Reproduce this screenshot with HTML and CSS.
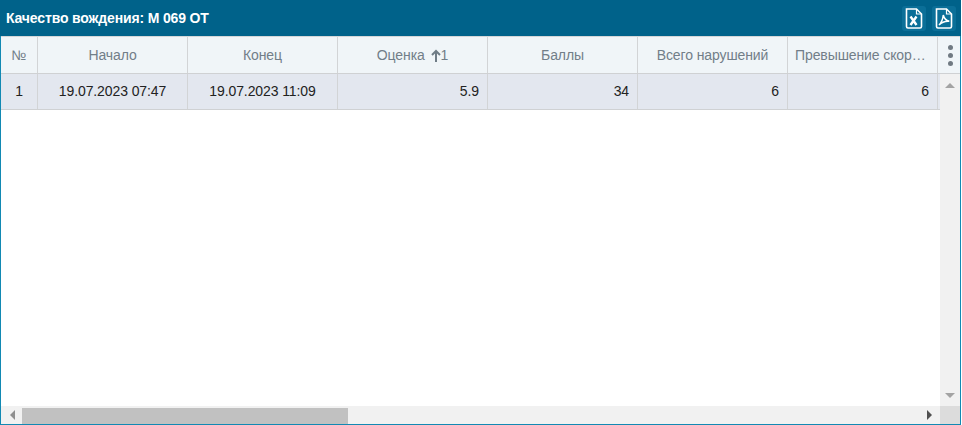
FILE: index.html
```html
<!DOCTYPE html>
<html lang="ru">
<head>
<meta charset="utf-8">
<title>Качество вождения</title>
<link rel="stylesheet" href="styles.css">
</head>
<body>
<div class="panel">
  <header class="titlebar">
    <h1 class="title">Качество вождения: М 069 ОТ</h1>
    <div class="actions">
      <span class="tile">
        <svg width="18" height="21" viewBox="0 0 18 21" fill="none" stroke="#fff" stroke-width="1.600"><path d="M1.500 1h10l5 5v12.500a1.500 1.500 0 0 1-1.500 1.500H3a1.500 1.500 0 0 1-1.500-1.500z"/><path d="M11.500 1v5h5" stroke-width="1.200"/><path d="M5.500 8.500l6 8.500M11.500 8.500l-6 8.500" stroke-width="2.400"/></svg>
      </span>
      <span class="tile">
        <svg width="18" height="21" viewBox="0 0 18 21" fill="none" stroke="#fff" stroke-width="1.600"><path d="M1.500 1h10l5 5v12.500a1.500 1.500 0 0 1-1.500 1.500H3a1.500 1.500 0 0 1-1.500-1.500z"/><path d="M11.500 1v5h5" stroke-width="1.200"/><path d="M4 17c2.200-2.200 3.800-5.500 4.300-10 .8 3.500 2.500 5.500 6 6.300-3.500-.3-7.500.8-10.300 3.700z" stroke-width="1.500"/></svg>
      </span>
    </div>
  </header>
  <div class="head">
    <div class="hc c-n">№</div>
    <div class="hc c-w">Начало</div>
    <div class="hc c-w">Конец</div>
    <div class="hc c-w">Оценка <span class="sort"><svg width="10" height="13" viewBox="0 0 10 13" fill="none" stroke="#6f7c86" stroke-width="2"><path d="M5 13V2M1 6l4-4 4 4"/></svg>1</span></div>
    <div class="hc c-w">Баллы</div>
    <div class="hc c-w">Всего нарушений</div>
    <div class="hc c-w hc-clip"><span class="clip">Превышение скорости</span></div>
    <div class="menu"><i></i><i></i><i></i></div>
  </div>
  <div class="body">
    <div class="rows">
      <div class="row">
        <div class="td c-n center">1</div>
        <div class="td c-w center">19.07.2023 07:47</div>
        <div class="td c-w center">19.07.2023 11:09</div>
        <div class="td c-w right">5.9</div>
        <div class="td c-w right">34</div>
        <div class="td c-w right">6</div>
        <div class="td c-w right">6</div>
      </div>
    </div>
    <div class="vscroll">
      <span class="arrow up"></span>
      <span class="arrow down"></span>
    </div>
  </div>
  <div class="hscroll">
    <span class="arrow left"></span>
    <div class="thumb"></div>
    <span class="arrow right"></span>
    <div class="corner"></div>
  </div>
</div>
</body>
</html>
```
FILE: styles.css
```css
* { box-sizing: border-box; }
html, body { margin: 0; height: 100%; }
body { font-family: "Liberation Sans", Arial, sans-serif; background: #fff; overflow: hidden; }
.panel {
  width: 961px; height: 425px;
  display: flex; flex-direction: column;
  border: 1px solid #1289b3; border-top: 0;
  background: #fff;
}
.titlebar {
  height: 36px; flex: none;
  margin: 0 -1px;
  background: #00628a;
  display: flex; align-items: center; justify-content: space-between;
  padding: 0 5px 0 6px;
}
.title { margin: 0; font-size: 14px; font-weight: 700; color: #fff; line-height: 36px; letter-spacing: -0.15px; }
.actions { display: flex; gap: 6px; margin-top: 1px; }
.tile {
  width: 24px; height: 25px; border-radius: 3px;
  background: #0b6f98;
  display: flex; align-items: center; justify-content: center;
}
.head {
  height: 38px; flex: none;
  display: flex;
  background: #f0f5f8;
  border-top: 1px solid #d4d6d8;
  border-bottom: 1px solid #cfd1d3;
}
.hc {
  display: flex; align-items: center; justify-content: center;
  font-size: 14px; color: #727e88; letter-spacing: -0.1px;
  border-right: 1px solid #d2d4d6;
  padding: 0 8px;
  white-space: pre;
}
.hc-clip { justify-content: flex-start; padding: 0 11px 0 7px; }
.sort { display: inline-flex; align-items: center; gap: 0; margin-left: 2px; }
.clip { overflow: hidden; text-overflow: ellipsis; }
.c-n { width: 37px; flex: none; padding: 0; }
.c-w { width: 150px; flex: none; }
.menu {
  flex: 1;
  display: flex; flex-direction: column; align-items: center; justify-content: center; gap: 3px;
  padding-left: 2px;
}
.menu i { width: 5px; height: 5px; border-radius: 50%; background: #707a82; display: block; }
.body { flex: 1; min-height: 0; display: flex; }
.rows { width: 939px; flex: none; overflow: hidden; }
.row { display: flex; width: 1000px; height: 36px; background: #e3e7ef; border-bottom: 1px solid #cfd1d3; }
.td {
  font-size: 14px; color: #222; letter-spacing: -0.1px;
  border-right: 1px solid #d2d4d6;
  line-height: 35px;
}
.center { text-align: center; }
.right { text-align: right; padding-right: 8px; }
.vscroll {
  flex: 1; background: #f1f1f1;
  display: flex; flex-direction: column; align-items: center; justify-content: space-between;
  padding: 9px 0 8px;
}
.arrow { width: 0; height: 0; display: block; border-style: solid; border-color: transparent; }
.arrow.up { border-width: 0 5px 5px; border-bottom-color: #a3a3a3; }
.arrow.down { border-width: 5px 5px 0; border-top-color: #a3a3a3; }
.arrow.left { border-width: 5px 5px 5px 0; border-right-color: #8f8f8f; margin: 0 7px 0 9px; }
.arrow.right { border-width: 5px 0 5px 5px; border-left-color: #505050; margin-left: 579px; }
.hscroll {
  height: 18px; flex: none;
  display: flex; align-items: center;
  background: #f1f1f1;
}
.thumb { width: 326px; height: 16px; margin-top: 2px; background: #c1c1c1; }
.corner { width: 20px; height: 18px; margin-left: auto; background: #dcdcdc; }
```
